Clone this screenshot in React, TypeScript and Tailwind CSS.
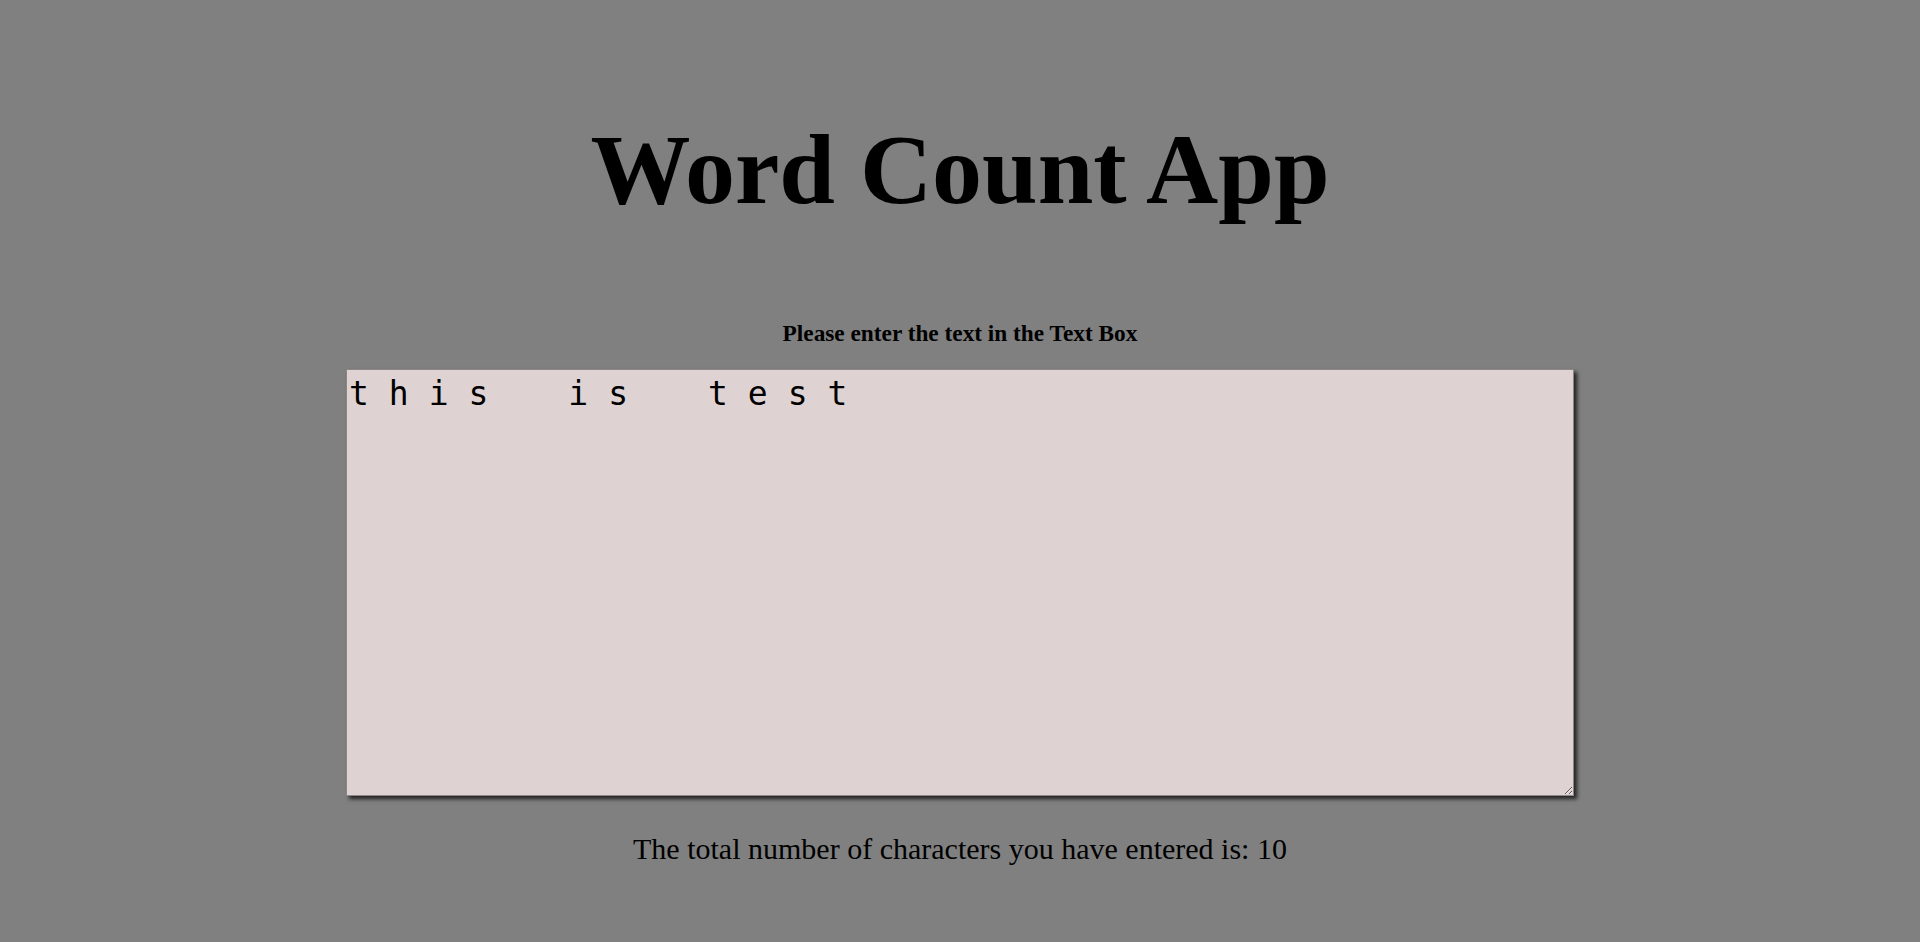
import { useState } from "react";

export default function App() {
  const [text, setText] = useState("this is test");
  const count = text.replace(/\s/g, "").length;
  return (
    <div className="min-h-[942px] w-full bg-[#808080] flex flex-col items-center font-['Liberation_Serif',serif] text-black">
      <h1 className="mt-[120px] text-[100px] leading-none font-bold">Word Count App</h1>
      <p className="mt-[102px] text-[23.3px] leading-none font-bold">Please enter the text in the Text Box</p>
      <textarea
        value={text}
        onChange={(e) => setText(e.target.value)}
        className="mt-[24px] w-[1228px] h-[427px] bg-[#dfd2d2] border border-[#8c8686] px-[2px] pt-[5px] pb-[2px] font-['DejaVu_Sans_Mono',monospace] text-[33px] leading-[1.16] tracking-[20px] [word-spacing:20px] text-black shadow-[3px_3px_4px_rgba(0,0,0,0.75)] outline-none resize"
      />
      <p className="mt-[38px] text-[30px] leading-none">
        The total number of characters you have entered is: {count}
      </p>
    </div>
  );
}
